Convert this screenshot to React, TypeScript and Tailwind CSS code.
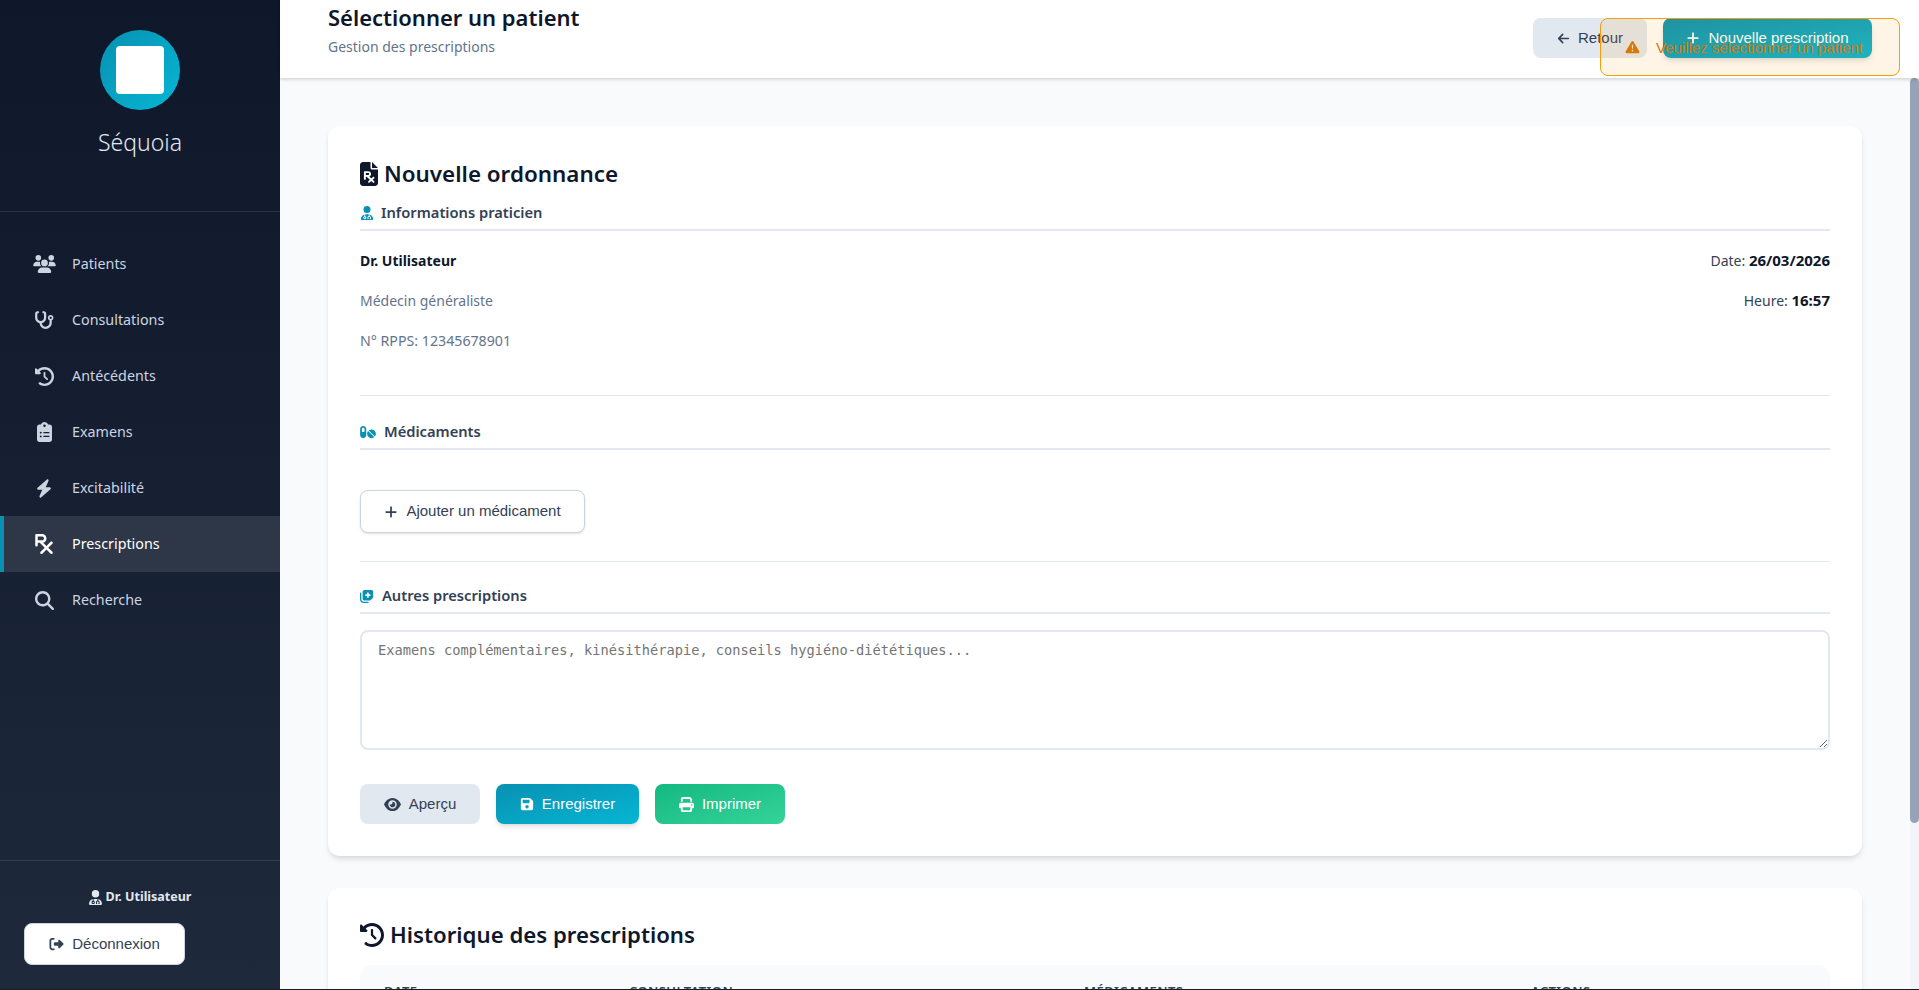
import { FaUsers, FaStethoscope, FaClockRotateLeft, FaClipboardList, FaBolt, FaPrescription, FaMagnifyingGlass, FaUserDoctor, FaRightFromBracket, FaFilePrescription, FaPills, FaNotesMedical, FaArrowLeft, FaPlus, FaTriangleExclamation, FaEye, FaFloppyDisk, FaPrint } from "react-icons/fa6";

const nav = [
    { label: "Patients", icon: FaUsers, size: "w-[23px] h-[18px]" },
    { label: "Consultations", icon: FaStethoscope, size: "w-5 h-[18px]" },
    { label: "Antécédents", icon: FaClockRotateLeft, size: "w-[19px] h-[19px]" },
    { label: "Examens", icon: FaClipboardList, size: "w-[15px] h-5" },
    { label: "Excitabilité", icon: FaBolt, size: "w-4 h-[19px]" },
    { label: "Prescriptions", icon: FaPrescription, size: "w-[18px] h-5", active: true },
    { label: "Recherche", icon: FaMagnifyingGlass, size: "w-[19px] h-[19px]" },
];

function Sidebar() {
    return (
        <aside className="w-[280px] shrink-0 flex flex-col bg-gradient-to-b from-[#0f172a] to-[#1e293b]">
            <div className="h-[212px] shrink-0 pt-[30px] flex flex-col items-center border-b border-white/10">
                <div className="w-20 h-20 rounded-full flex items-center justify-center bg-gradient-to-br from-[#0891b2] to-[#06b6d4]">
                    <div className="w-12 h-12 rounded bg-white" />
                </div>
                <div className="mt-[15px] text-[23px] font-light text-[#e2e8f0]">Séquoia</div>
            </div>
            <nav className="flex-1 pt-6">
                {nav.map((item) => (
                    <div
                        key={item.label}
                        className={
                            item.active
                                ? "h-14 flex items-center border-l-4 border-[#0891b2] bg-white/10 text-white text-[14.3px] pl-[28px]"
                                : "h-14 flex items-center border-l-4 border-transparent text-[#cbd5e1] text-[14.3px] pl-[28px]"
                        }
                    >
                        <span className="w-6 flex justify-center mr-4">
                            <item.icon className={item.size} />
                        </span>
                        {item.label}
                    </div>
                ))}
            </nav>
            <div className="h-[129px] shrink-0 border-t border-white/10 px-6 pt-[27px]">
                <div className="flex items-center justify-center gap-1 text-[12.5px] font-bold text-[#e2e8f0]">
                    <FaUserDoctor className="w-[13px] h-[15px]" />
                    Dr. Utilisateur
                </div>
                <button className="mt-4 w-[161px] h-[42px] flex items-center justify-center gap-2 rounded-lg bg-white border border-[#cbd5e1] text-[#334155] text-[15px] font-['Liberation_Sans',sans-serif]">
                    <FaRightFromBracket className="w-[15px] h-[14px]" />
                    Déconnexion
                </button>
            </div>
        </aside>
    );
}

function SectionTitle({ icon: Icon, children, gap, size }: { icon: typeof FaPills; children: string; gap: string; size: string }) {
    return (
        <h3 className={`flex items-center ${gap} h-[36px] pt-[1px] border-b-2 border-[#e2e8f0] text-[14.7px] font-semibold text-[#334155]`}>
            <Icon className={`text-[#0891b2] ${size}`} />
            {children}
        </h3>
    );
}

function Header() {
    return (
        <header className="relative z-10 h-[78px] shrink-0 bg-white shadow-[0_1px_4px_rgba(0,0,0,0.2)] pl-12 pr-[47px] flex justify-between">
            <div>
                <h1 className="text-[22px] leading-[35px] font-semibold text-[#0f172a]">Sélectionner un patient</h1>
                <p className="text-sm mt-[2px] text-[#64748b]">Gestion des prescriptions</p>
            </div>
            <div className="flex gap-4 pt-[18px] font-['Liberation_Sans',sans-serif] text-[15px]">
                <button className="h-10 w-[114px] rounded-lg bg-[#e2e8f0] text-[#334155] flex items-center justify-center gap-2">
                    <FaArrowLeft className="w-[13px] h-[13px]" />
                    Retour
                </button>
                <button className="h-10 w-[209px] rounded-lg bg-gradient-to-br from-[#0891b2] to-[#06b6d4] text-white flex items-center justify-center gap-2 shadow-md">
                    <FaPlus className="w-[14px] h-[14px]" />
                    Nouvelle prescription
                </button>
            </div>
        </header>
    );
}

export default function App() {
    return (
        <div className="relative h-screen flex border-b border-[#1c1c1c] bg-[#f8fafc] font-['Noto_Sans',sans-serif] overflow-hidden">
            <Sidebar />
            <main className="flex-1 min-w-0 flex flex-col">
                <Header />
                <div className="flex-1 min-h-0 flex">
                    <div className="flex-1 min-w-0 overflow-hidden px-12 pt-12">
                        <section className="bg-white rounded-xl shadow-md px-8 pt-8 h-[730px] mb-8">
                            <h2 className="flex items-center gap-[6px] text-[22.4px] leading-8 font-semibold text-[#0f172a]">
                                <FaFilePrescription className="w-[18px] h-6" />
                                Nouvelle ordonnance
                            </h2>
                            <div className="mt-[5px]">
                                <SectionTitle icon={FaUserDoctor} gap="gap-[7px]" size="w-[14px] h-[14px]">Informations praticien</SectionTitle>
                            </div>
                            <div className="flex justify-between text-sm pt-[14px] pb-[26px] border-b border-[#e2e8f0] h-[165px]">
                                <div>
                                    <p className="h-10 leading-[32px] font-bold text-[#0f172a]">Dr. Utilisateur</p>
                                    <p className="h-10 leading-[32px] text-[#64748b]">Médecin généraliste</p>
                                    <p className="h-10 leading-[32px] text-[14.2px] text-[#64748b]">N° RPPS: 12345678901</p>
                                </div>
                                <div className="text-right text-[#334155]">
                                    <p className="h-10 leading-[30px]">Date: <b className="text-[15px] text-[#0f172a]">26/03/2026</b></p>
                                    <p className="h-10 leading-[30px]">Heure: <b className="text-[15px] text-[#0f172a]">16:57</b></p>
                                </div>
                            </div>
                            <div className="mt-[18px]">
                                <SectionTitle icon={FaPills} gap="gap-2" size="w-4 h-[14px]">Médicaments</SectionTitle>
                            </div>
                            <div className="pt-[40px] pb-[28px] border-b border-[#e2e8f0]">
                                <button className="w-[225px] h-[43px] flex items-center justify-center gap-2 rounded-lg bg-white border border-[#cbd5e1] text-[#334155] text-[15px] font-['Liberation_Sans',sans-serif] shadow-sm">
                                    <FaPlus className="w-[14px] h-[14px]" />
                                    Ajouter un médicament
                                </button>
                            </div>
                            <div className="mt-4">
                                <SectionTitle icon={FaNotesMedical} gap="gap-2" size="w-[14px] h-[14px]">Autres prescriptions</SectionTitle>
                            </div>
                            <textarea
                                className="mt-4 block w-full h-[120px] rounded-lg border-2 border-[#e2e8f0] px-4 py-2 text-[13.7px] font-['DejaVu_Sans_Mono',monospace] placeholder:text-[#757575] outline-none"
                                placeholder="Examens complémentaires, kinésithérapie, conseils hygiéno-diététiques..."
                            />
                            <div className="mt-[34px] flex gap-4 text-[15px] font-['Liberation_Sans',sans-serif]">
                                <button className="w-[120px] h-10 rounded-lg bg-[#e2e8f0] text-[#334155] flex items-center justify-center gap-2">
                                    <FaEye className="w-[17px] h-[15px]" />
                                    Aperçu
                                </button>
                                <button className="w-[143px] h-10 rounded-lg bg-gradient-to-br from-[#0891b2] to-[#06b6d4] text-white flex items-center justify-center gap-2 shadow-md">
                                    <FaFloppyDisk className="w-[14px] h-[14px]" />
                                    Enregistrer
                                </button>
                                <button className="w-[130px] h-10 rounded-lg bg-gradient-to-br from-[#10b981] to-[#34d399] text-white flex items-center justify-center gap-2">
                                    <FaPrint className="w-[15px] h-[15px]" />
                                    Imprimer
                                </button>
                            </div>
                        </section>
                        <section className="bg-white rounded-xl shadow-md px-8 pt-[31px] h-[200px]">
                            <h2 className="flex items-center gap-[6px] text-[22.2px] leading-8 font-semibold text-[#0f172a]">
                                <FaClockRotateLeft className="w-6 h-6" />
                                Historique des prescriptions
                            </h2>
                            <div className="mt-[14px] rounded-t-xl bg-[#f8fafc] h-[60px] grid grid-cols-[245px_455px_447px_1fr] pl-6 pt-[17px] text-[13px] tracking-[0.4px] font-semibold text-[#334155] uppercase">
                                <span>Date</span>
                                <span>Consultation</span>
                                <span>Médicaments</span>
                                <span>Actions</span>
                            </div>
                        </section>
                    </div>
                    <div className="w-[9px] shrink-0 bg-[#f1f5f9]">
                        <div className="h-[745px] rounded-[5px] bg-[#94a3b8]" />
                    </div>
                </div>
            </main>
            <div className="absolute z-20 top-[18px] left-[1600px] w-[300px] h-[58px] rounded-lg border border-[#f59e0b] bg-[#f59e0b]/10 text-[#d97706] flex items-center gap-4 pl-6 text-[15px] font-['Liberation_Sans',sans-serif]">
                <FaTriangleExclamation className="w-[15px] h-[14px]" />
                <span className="mt-[2px]">Veuillez sélectionner un patient</span>
            </div>
        </div>
    );
}
